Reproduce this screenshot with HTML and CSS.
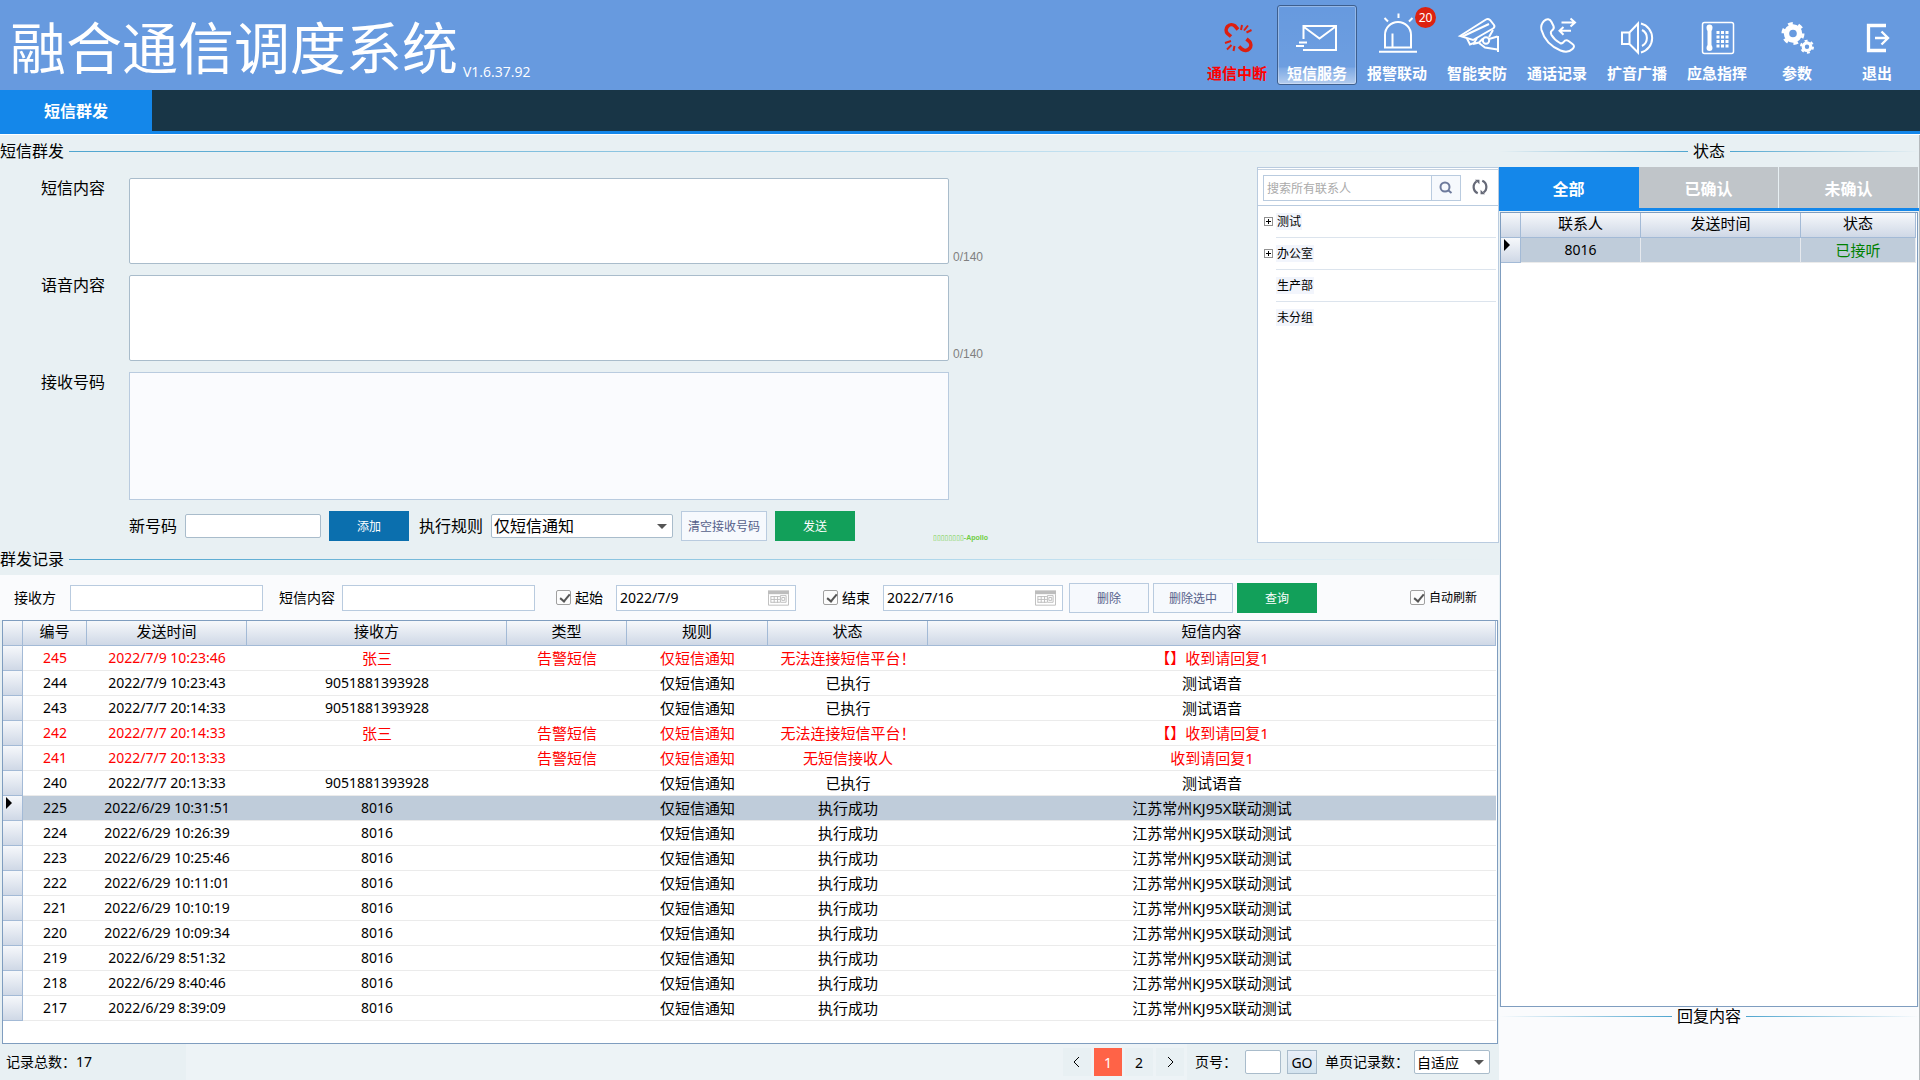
FILE: index.html
```html
<!DOCTYPE html>
<html lang="zh-CN">
<head>
  <meta charset="UTF-8" />
  <title>融合通信调度系统</title>
  <link rel="stylesheet" href="styles.css">
</head>
<body>

<header class="header">
  <h1 class="title">融合通信调度系统</h1>
  <span class="version">V1.6.37.92</span>

  <nav class="toolbar">
    <button class="tool offline" type="button">
      <svg viewBox="0 0 48 48"><g stroke-width="3.6"><path d="M18 26.500L14.500 23.500a5.200 5.200 0 0 1 0-7a5.500 5.500 0 0 1 7.500-.5L25 19.500"/><path d="M33.500 29l3 2.500a5.200 5.200 0 0 1 0 7a5.500 5.500 0 0 1-7.500.8L26 36.500"/></g><path d="M29 15l-1 5M35 15.500l-4 5M38.500 20l-5 2.500M12 33l6-2M14 39.500l4.500-4.500M20.500 41l1-5"/></svg>
      <span>通信中断</span>
    </button>
    <button class="tool active" type="button">
      <svg viewBox="0 0 48 48"><path d="M10.500 29V16H43V40H10M11 17l15.500 11.500L42 17M6 32.500h8M3 36h8"/></svg>
      <span>短信服务</span>
    </button>
    <button class="tool" type="button">
      <svg viewBox="0 0 48 48"><path d="M12 37.500V25a13 13 0 0 1 26 0V37.500zM19.500 23.500V37M25.500 3.500v4.500M11.500 8l3.500 3.500M39.500 8L36 11.500"/><path d="M6 41.700H44"/></svg>
      <span>报警联动</span>
      <em class="badge">20</em>
    </button>
    <button class="tool" type="button">
      <svg viewBox="0 0 48 48"><path d="M7 26L33 9.500q2-1.200 4 .5l4 5q1.200 2-1 3.500L20 30z"/><path d="M9.500 26.500L36 14M14 28.500l3 6 4-1.500 3-5M20 34l6-1.500 4-4"/><circle cx="33" cy="30.500" r="3.200"/><path d="M36 29l8.500-2.500M26 33l6 4.500 12.500 2M45 26v16M40 20l-4 7"/></svg>
      <span>智能安防</span>
    </button>
    <button class="tool" type="button">
      <svg viewBox="0 0 48 48"><path d="M11 11c3-3 6-2 7.500 1l2 4c1 2 0 3.500-2 5-1 1-1 2 0 4 2 3.500 5 6 8.500 8 1.500.8 2.500.5 3.500-.8 1.500-2 3-2.500 5-1.200l4 3c2 1.500 2 3 0 5-3 3-7 3.500-12 1.500C18 36.500 11 29 8.500 20c-1-4 0-6.500 2.500-9z"/><path d="M28.500 12.500H42M37.500 8.500l4.500 4-4.500 4M38 20.700H26.500M30.500 17l-4 3.700 4 4"/></svg>
      <span>通话记录</span>
    </button>
    <button class="tool" type="button">
      <svg viewBox="0 0 48 48"><path d="M9 22.500h7.500L25 13.500V42.500L16.500 34H9zM16.500 22.500V34M29 20a9 9 0 0 1 0 16M28 13.500a15 15 0 0 1 0 29"/></svg>
      <span>扩音广播</span>
    </button>
    <button class="tool" type="button">
      <svg viewBox="0 0 48 48"><rect x="9.500" y="12.500" width="31" height="31" rx="2" stroke-width="1.500"/><path class="solid" d="M13.500 17.500a3 3 0 0 1 6 0q0 2-1 3.500v14q1 1.500 1 3a3 3 0 0 1-6 0q0-1.500 1-3V21q-1-1.500-1-3.500z"/><path d="M23.500 22.500h3m1.500 0h3m1.500 0h3M23.500 27h3m1.500 0h3m1.500 0h3M23.500 31.500h3m1.500 0h3m1.500 0h3M23.500 36h3m1.500 0h3m1.500 0h3" stroke-width="3"/></svg>
      <span>应急指挥</span>
    </button>
    <button class="tool" type="button">
      <svg viewBox="0 0 48 48"><circle cx="20" cy="23.500" r="6.500" stroke-width="5.400"/><circle cx="20" cy="23.500" r="10" stroke-width="3" stroke-dasharray="4.700 5.772"/><circle cx="34" cy="36.700" r="3.800" stroke-width="3.200"/><circle cx="34" cy="36.700" r="6" stroke-width="2" stroke-dasharray="3 3.283"/></svg>
      <span>参数</span>
    </button>
    <button class="tool" type="button">
      <svg viewBox="0 0 48 48"><path d="M33 15.500H15.500V40.500H33" stroke-width="3.300"/><path d="M22 28H34M28.500 21.500L35 28l-6.500 6.500" stroke-width="2.400"/></svg>
      <span>退出</span>
    </button>
  </nav>
</header>

<div class="nav">
  <a class="nav-tab" href="#">短信群发</a>
</div>

<main class="main">
  <div class="left">

    <!-- Send form -->
    <h2 class="section-title">短信群发</h2>
    <div class="send">
      <form class="send-form">
        <label for="sms">短信内容</label>
        <textarea id="sms" class="box"></textarea>
        <span class="counter">0/140</span>

        <label for="voice">语音内容</label>
        <textarea id="voice" class="box"></textarea>
        <span class="counter">0/140</span>

        <label for="numbers">接收号码</label>
        <textarea id="numbers" class="box numbers" readonly></textarea>
        <span></span>

        <div class="actions">
          <label for="newNumber">新号码</label>
          <input id="newNumber" class="new-number" type="text">
          <button class="btn blue" type="button">添加</button>
          <label for="rule">执行规则</label>
          <span class="select rule">
            <select id="rule"><option>仅短信通知</option></select>
          </span>
          <button class="btn clear" type="button">清空接收号码</button>
          <button class="btn green" type="button">发送</button>
          <span class="mark">▯▯▯▯▯▯▯▯-Apollo</span>
        </div>
      </form>

      <aside class="contacts">
        <div class="search">
          <input type="text" placeholder="搜索所有联系人" aria-label="搜索所有联系人">
          <button class="search-btn" type="button" aria-label="搜索">
            <svg viewBox="0 0 16 16"><circle cx="7" cy="7" r="4.500"/><path d="M10.500 10.500L13.500 13"/></svg>
          </button>
          <button class="refresh" type="button" aria-label="刷新">
            <svg viewBox="0 0 16 16"><path d="M6 13.500A6 6 0 0 1 5 3M10 2.500A6 6 0 0 1 11 13"/><path class="tip" d="M3.500 1.500h4v4zM12.500 14.500h-4v-4z"/></svg>
          </button>
        </div>
        <ul class="tree">
          <li><button class="expand" type="button" aria-label="展开"></button><span>测试</span></li>
          <li><button class="expand" type="button" aria-label="展开"></button><span>办公室</span></li>
          <li><span>生产部</span></li>
          <li><span>未分组</span></li>
        </ul>
      </aside>
    </div>

    <!-- Records -->
    <h2 class="section-title">群发记录</h2>
    <form class="filter">
      <label for="fReceiver">接收方</label>
      <input id="fReceiver" class="field first" type="text">
      <label for="fContent">短信内容</label>
      <input id="fContent" class="field second" type="text">
      <label class="check"><input type="checkbox" checked>起始</label>
      <span class="date">
        <input class="field" type="text" value="2022/7/9" aria-label="起始日期">
        <svg viewBox="0 0 22 16"><path class="bar" d="M0 0h22v4H0z"/><path d="M.5 4v11.500h21V4M3 6.500h9.500M3 9.500h9.500M3 12.500h9.500M3 6v7M6.500 6v7M10 6v7M13 5.500h6v7h-6zM14.500 7.500h3v3h-3z"/></svg>
      </span>
      <label class="check"><input type="checkbox" checked>结束</label>
      <span class="date">
        <input class="field" type="text" value="2022/7/16" aria-label="结束日期">
        <svg viewBox="0 0 22 16"><path class="bar" d="M0 0h22v4H0z"/><path d="M.5 4v11.500h21V4M3 6.500h9.500M3 9.500h9.500M3 12.500h9.500M3 6v7M6.500 6v7M10 6v7M13 5.500h6v7h-6zM14.500 7.500h3v3h-3z"/></svg>
      </span>
      <div class="filter-btns">
        <button class="btn" type="button">删除</button>
        <button class="btn" type="button">删除选中</button>
        <button class="btn green" type="button">查询</button>
      </div>
      <label class="check auto"><input type="checkbox" checked>自动刷新</label>
    </form>

    <div class="grid records">
      <table>
        <colgroup>
          <col class="w20"><col class="w64"><col class="w160"><col class="w260"><col class="w120"><col class="w141"><col class="w160"><col>
        </colgroup>
        <thead>
          <tr><th></th><th>编号</th><th>发送时间</th><th>接收方</th><th>类型</th><th>规则</th><th>状态</th><th>短信内容</th></tr>
        </thead>
        <tbody>
          <tr class="alarm"><th></th><td class="num">245</td><td class="num">2022/7/9 10:23:46</td><td>张三</td><td>告警短信</td><td>仅短信通知</td><td>无法连接短信平台！</td><td>【】收到请回复1</td></tr>
          <tr><th></th><td class="num">244</td><td class="num">2022/7/9 10:23:43</td><td class="num">9051881393928</td><td></td><td>仅短信通知</td><td>已执行</td><td>测试语音</td></tr>
          <tr><th></th><td class="num">243</td><td class="num">2022/7/7 20:14:33</td><td class="num">9051881393928</td><td></td><td>仅短信通知</td><td>已执行</td><td>测试语音</td></tr>
          <tr class="alarm"><th></th><td class="num">242</td><td class="num">2022/7/7 20:14:33</td><td>张三</td><td>告警短信</td><td>仅短信通知</td><td>无法连接短信平台！</td><td>【】收到请回复1</td></tr>
          <tr class="alarm"><th></th><td class="num">241</td><td class="num">2022/7/7 20:13:33</td><td></td><td>告警短信</td><td>仅短信通知</td><td>无短信接收人</td><td>收到请回复1</td></tr>
          <tr><th></th><td class="num">240</td><td class="num">2022/7/7 20:13:33</td><td class="num">9051881393928</td><td></td><td>仅短信通知</td><td>已执行</td><td>测试语音</td></tr>
          <tr class="current"><th></th><td class="num">225</td><td class="num">2022/6/29 10:31:51</td><td class="num">8016</td><td></td><td>仅短信通知</td><td>执行成功</td><td>江苏常州KJ95X联动测试</td></tr>
          <tr><th></th><td class="num">224</td><td class="num">2022/6/29 10:26:39</td><td class="num">8016</td><td></td><td>仅短信通知</td><td>执行成功</td><td>江苏常州KJ95X联动测试</td></tr>
          <tr><th></th><td class="num">223</td><td class="num">2022/6/29 10:25:46</td><td class="num">8016</td><td></td><td>仅短信通知</td><td>执行成功</td><td>江苏常州KJ95X联动测试</td></tr>
          <tr><th></th><td class="num">222</td><td class="num">2022/6/29 10:11:01</td><td class="num">8016</td><td></td><td>仅短信通知</td><td>执行成功</td><td>江苏常州KJ95X联动测试</td></tr>
          <tr><th></th><td class="num">221</td><td class="num">2022/6/29 10:10:19</td><td class="num">8016</td><td></td><td>仅短信通知</td><td>执行成功</td><td>江苏常州KJ95X联动测试</td></tr>
          <tr><th></th><td class="num">220</td><td class="num">2022/6/29 10:09:34</td><td class="num">8016</td><td></td><td>仅短信通知</td><td>执行成功</td><td>江苏常州KJ95X联动测试</td></tr>
          <tr><th></th><td class="num">219</td><td class="num">2022/6/29 8:51:32</td><td class="num">8016</td><td></td><td>仅短信通知</td><td>执行成功</td><td>江苏常州KJ95X联动测试</td></tr>
          <tr><th></th><td class="num">218</td><td class="num">2022/6/29 8:40:46</td><td class="num">8016</td><td></td><td>仅短信通知</td><td>执行成功</td><td>江苏常州KJ95X联动测试</td></tr>
          <tr><th></th><td class="num">217</td><td class="num">2022/6/29 8:39:09</td><td class="num">8016</td><td></td><td>仅短信通知</td><td>执行成功</td><td>江苏常州KJ95X联动测试</td></tr>
        </tbody>
      </table>
    </div>

    <footer class="footer">
      <span class="total">记录总数：17</span>
      <div class="pages">
        <button type="button" aria-label="上一页"><svg viewBox="0 0 10 12"><path d="M7 1L2 6l5 5"/></svg></button>
        <button class="on" type="button">1</button>
        <button type="button">2</button>
        <button type="button" aria-label="下一页"><svg viewBox="0 0 10 12"><path d="M3 1l5 5-5 5"/></svg></button>
      </div>
      <div class="jump">
        <label for="pageNo">页号：</label>
        <input id="pageNo" type="text">
        <button class="go" type="button">GO</button>
        <label for="pageSize">单页记录数：</label>
        <span class="select size">
          <select id="pageSize"><option>自适应</option></select>
        </span>
      </div>
    </footer>
  </div>

  <!-- Status panel -->
  <div class="right">
    <h2 class="section-title center">状态</h2>
    <div class="tabs">
      <button class="on" type="button">全部</button>
      <button type="button">已确认</button>
      <button type="button">未确认</button>
    </div>
    <div class="grid status">
      <table>
        <colgroup>
          <col class="w20"><col class="w120"><col class="w160"><col>
        </colgroup>
        <thead>
          <tr><th></th><th>联系人</th><th>发送时间</th><th>状态</th></tr>
        </thead>
        <tbody>
          <tr class="current"><th></th><td class="num">8016</td><td></td><td class="ok">已接听</td></tr>
        </tbody>
      </table>
    </div>
    <div class="reply">
      <h2 class="section-title center">回复内容</h2>
    </div>
  </div>
</main>

</body>
</html>
```
FILE: styles.css
```css
* {
  box-sizing: border-box;
}
body {
  margin: 0;
  min-height: 100vh;
  display: flex;
  flex-direction: column;
  background: #e8f0f3;
  color: #000;
  font-family: "Noto Sans", "Noto Sans CJK SC", sans-serif;
  font-size: 16px;
  line-height: 20px;
}
button, input, select, textarea {
  font-family: inherit;
  color: inherit;
  margin: 0;
}
button {
  padding: 0;
  border: none;
  background: none;
}
svg {
  fill: none;
  stroke: currentColor;
}

/* Header */
.header {
  height: 90px;
  display: flex;
  background: #679adf;
  color: #fff;
}
.title {
  margin: 0 0 0 10px;
  font-size: 56px;
  font-weight: normal;
  line-height: 94px;
  white-space: nowrap;
}
.version {
  margin: 62px 0 0 5px;
  font-family: "Open Sans", sans-serif;
  font-size: 14px;
}
.toolbar {
  display: flex;
  margin-left: auto;
  padding: 5px 3px 5px 0;
}
.tool {
  position: relative;
  width: 80px;
  height: 80px;
  border: 1px solid transparent;
  border-radius: 3px;
  padding-top: 4px;
  display: flex;
  flex-direction: column;
  align-items: center;
  gap: 5px;
  color: #fff;
  font-size: 15px;
  font-weight: bold;
  line-height: 20px;
}
.tool svg {
  width: 48px;
  height: 48px;
  flex: none;
  stroke-width: 2;
}
.tool .solid {
  fill: currentColor;
  stroke: none;
}
.tool.active {
  border-color: #3e5f8e;
  background: linear-gradient(rgba(255,255,255,0), rgba(255,255,255,0.04) 78%, rgba(255,255,255,0.15) 80%, rgba(255,255,255,0.5));
  box-shadow: inset 0 0 0 1px rgba(255,255,255,0.3);
}
.tool.offline {
  color: #ff0000;
}
.tool.offline svg {
  color: #dd1f10;
}
.badge {
  position: absolute;
  top: 1px;
  right: 0;
  width: 21px;
  height: 21px;
  border-radius: 50%;
  background: #dd220f;
  font-size: 12px;
  font-style: normal;
  font-weight: normal;
  line-height: 21px;
  text-align: center;
}

/* Nav bar */
.nav {
  display: flex;
  height: 45px;
  background: #183546;
  border-bottom: 1px solid #fff;
  box-shadow: inset 0 -3px 0 #1487ea;
}
.nav-tab {
  width: 152px;
  background: #1487ea;
  color: #fff;
  font-weight: bold;
  line-height: 42px;
  text-align: center;
  text-decoration: none;
}

/* Layout */
.main {
  flex: 1;
  display: flex;
}
.left {
  flex: 1;
  min-width: 0;
  display: flex;
  flex-direction: column;
}
.right {
  width: 421px;
  border-right: 1px solid #b5babd;
  display: flex;
  flex-direction: column;
}
.section-title {
  margin: 0;
  height: 32px;
  display: flex;
  align-items: center;
  gap: 5px;
  font-size: 16px;
  font-weight: normal;
}
.section-title::after,
.section-title.center::before {
  content: "";
  flex: 1;
  height: 1px;
  background: linear-gradient(to right, #4fa5cf, #a5d2e8 55%, #d5eaf5 80%, transparent);
}
.section-title.center::before {
  background: linear-gradient(to left, #4fa5cf, transparent);
}
.section-title.center::after {
  background: linear-gradient(to right, #4fa5cf, transparent);
}

/* Send form */
.send {
  display: flex;
}
.send-form {
  flex: 1;
  display: grid;
  grid-template-columns: 129px minmax(0, 820px) 1fr;
  row-gap: 11px;
  padding: 11px 0 2px;
}
.send-form > label {
  padding-left: 41px;
}
.box {
  height: 86px;
  display: block;
  resize: none;
  background: #fff;
  border: 1px solid #a9bccb;
  border-radius: 2px;
}
.box.numbers {
  height: 128px;
  background: #fafbfe;
  border-color: #b9cbdf;
  border-radius: 0;
}
.counter {
  align-self: end;
  padding-left: 4px;
  color: #808080;
  font-family: "Liberation Sans", sans-serif;
  font-size: 12px;
  line-height: 14px;
}
.actions {
  grid-column: 2 / 4;
  display: flex;
  align-items: center;
  gap: 8px;
}
.new-number {
  width: 136px;
  height: 24px;
  border: 1px solid #a9bccb;
  border-radius: 2px;
}
.btn {
  width: 80px;
  height: 30px;
  border: 1px solid #b9cbdf;
  background: #f6f9fd;
  color: #55608a;
  font-size: 12px;
}
.btn.clear {
  width: 86px;
}
.btn.blue {
  margin-right: 2px;
  background: #0b6fae;
  border-color: #0b6fae;
  color: #fff;
}
.btn.green {
  background: #12a05a;
  border-color: #12a05a;
  color: #fff;
}
.select {
  position: relative;
  display: block;
}
.select select {
  width: 100%;
  height: 24px;
  padding: 0 2px;
  appearance: none;
  background: #fff;
  border: 1px solid #a9bccb;
  border-radius: 2px;
  font-size: 16px;
}
.select::after {
  content: "";
  position: absolute;
  right: 6px;
  top: 10px;
  border: 5px solid transparent;
  border-top-color: #555;
  border-bottom: none;
  pointer-events: none;
}
.select.rule {
  width: 182px;
}
.select.size {
  width: 76px;
}
.select.size select {
  font-size: 14px;
}
.mark {
  align-self: end;
  margin-left: 70px;
  color: #6fce40;
  font-family: "Liberation Sans", "DejaVu Sans", sans-serif;
  font-size: 7px;
  font-weight: bold;
  line-height: 7px;
}

/* Contacts */
.contacts {
  width: 242px;
  background: #fff;
  border: 1px solid #b9cbdf;
}
.search {
  display: flex;
  height: 38px;
  padding: 6px 0 6px 5px;
  border-top: 1px solid #fff;
  border-bottom: 1px solid #b9cbdf;
  box-shadow: inset 0 1px 0 #c4d2e0;
}
.search input {
  width: 169px;
  height: 26px;
  padding: 0 3px;
  border: 1px solid #b9cbdf;
  font-size: 12px;
}
.search input::placeholder {
  color: #aaa;
  opacity: 1;
}
.search-btn {
  width: 29px;
  height: 26px;
  border: 1px solid #b9cbdf;
  border-left: none;
  background: #f6f9fd;
  color: #6d7a9c;
}
.search svg {
  display: block;
  width: 16px;
  height: 16px;
  margin: 0 auto;
  stroke-width: 2;
}
.refresh {
  flex: 1;
  color: #666a78;
}
.search .refresh svg {
  width: 18px;
  height: 18px;
}
.refresh .tip {
  fill: currentColor;
  stroke: none;
}
.tree {
  list-style: none;
  margin: 0;
  padding: 0 2px 0 18px;
  font-size: 12px;
}
.tree li {
  position: relative;
  height: 32px;
  border-bottom: 1px solid #dce4ed;
  line-height: 32px;
}
.tree li:last-child {
  border-bottom: none;
}
.tree span {
  padding: 0 1px;
  background: #f2f5fc;
}
.expand {
  position: absolute;
  left: -12px;
  top: 11px;
  width: 9px;
  height: 9px;
  border: 1px solid #919191;
  background:
    linear-gradient(#000, #000) center / 5px 1px no-repeat,
    linear-gradient(#000, #000) center / 1px 5px no-repeat,
    #fff;
}

/* Filter bar */
.filter {
  display: flex;
  align-items: center;
  height: 45px;
  padding: 0 22px 0 14px;
  background: #fafbfd;
  font-size: 14px;
}
.field {
  width: 193px;
  height: 26px;
  border: 1px solid #b9cbdf;
  background: #fff;
  padding: 0 3px;
  font-size: 14px;
}
.field.first {
  margin: 0 16px 0 14px;
}
.field.second {
  margin: 0 21px 0 7px;
}
.check {
  display: flex;
  align-items: center;
  gap: 4px;
}
.check input {
  appearance: none;
  width: 15px;
  height: 15px;
  border: 1px solid #a0a0a0;
  border-radius: 2px;
  background: #fcfcfc;
}
.check input:checked::after {
  content: "";
  display: block;
  width: 4px;
  height: 8px;
  margin: 1px 0 0 5px;
  border: solid #555;
  border-width: 0 2px 2px 0;
  transform: rotate(40deg);
}
.date {
  position: relative;
  margin: 0 27px 0 13px;
}
.date .field {
  display: block;
  width: 180px;
}
.date svg {
  position: absolute;
  right: 7px;
  top: 5px;
  width: 21px;
  height: 16px;
  color: #bdbdbd;
}
.date .bar {
  fill: currentColor;
  stroke: none;
}
.filter-btns {
  display: flex;
  gap: 4px;
  margin-left: -21px;
}
.auto {
  margin-left: auto;
  font-size: 12px;
}

/* Grids */
.grid {
  flex: 1;
  background: #fff;
  border: 1px solid #7f9dbf;
}
.records {
  margin: 0 1px 0 2px;
  padding-right: 1px;
}
.status {
  margin: 1px 1px 0 1px;
  padding-right: 1px;
}
table {
  width: 100%;
  table-layout: fixed;
  border-collapse: separate;
  border-spacing: 0;
}
.w20 { width: 20px; }
.w64 { width: 64px; }
.w120 { width: 120px; }
.w141 { width: 141px; }
.w160 { width: 160px; }
.w260 { width: 260px; }
th, td {
  height: 25px;
  padding: 0;
  font-size: 15px;
  font-weight: normal;
  line-height: 20px;
  text-align: center;
  text-spacing-trim: space-all;
  white-space: nowrap;
}
th {
  background: linear-gradient(#f6f8fb, #cfd8e6);
  border-right: 1px solid #a3bad6;
  border-bottom: 1px solid #a3bad6;
}
thead th {
  padding-bottom: 4px;
}
td {
  border-bottom: 1px solid #ebebeb;
}
td.num {
  font-size: 14px;
}
.alarm td {
  color: #ff0000;
}
.current td {
  background: #bfccda;
}
.current th::before {
  content: "";
  display: block;
  width: 0;
  margin: -10px 0 0 3px;
  border: 6px solid transparent;
  border-left-color: #000;
  border-right: none;
}
.status td {
  border-right: 1px solid #e6e9ee;
}
.current .ok {
  color: #008000;
}

/* Footer */
.footer {
  display: flex;
  align-items: center;
  height: 36px;
  background: linear-gradient(to right, #e8f0f3 186px, #edf3f6 186px);
  font-size: 14px;
}
.total {
  padding-left: 6px;
}
.pages {
  display: flex;
  gap: 3px;
  margin-left: auto;
  padding-right: 3px;
}
.pages button {
  width: 28px;
  height: 28px;
  background: #e8f0f3;
  font-size: 14px;
}
.pages button.on {
  background: #ff6347;
  color: #fff;
}
.pages svg {
  width: 10px;
  height: 12px;
}
.jump {
  display: flex;
  align-items: center;
  align-self: stretch;
  padding: 0 9px 0 8px;
  background: #e8f0f3;
}
.jump input {
  width: 36px;
  height: 24px;
  margin: 0 6px 0 8px;
  border: 1px solid #a9bccb;
  border-radius: 2px;
}
.jump .select {
  margin-left: 5px;
}
.go {
  width: 30px;
  height: 24px;
  margin-right: 8px;
  border: 1px solid #a9bccb;
  background: linear-gradient(#eaeff8, #d3e3ee);
  font-size: 14px;
}

/* Status panel */
.tabs {
  display: flex;
  height: 44px;
  border-bottom: 3px solid #1487ea;
}
.tabs button {
  flex: 1;
  background: #c0c5c9;
  border-right: 1px solid #e8f0f3;
  color: #fff;
  font-size: 16px;
  font-weight: bold;
}
.tabs button.on {
  background: #1487ea;
  border-color: #1487ea;
}
.reply {
  height: 73px;
  background: #fafbfd;
}
.reply .section-title {
  height: 18px;
}
```
